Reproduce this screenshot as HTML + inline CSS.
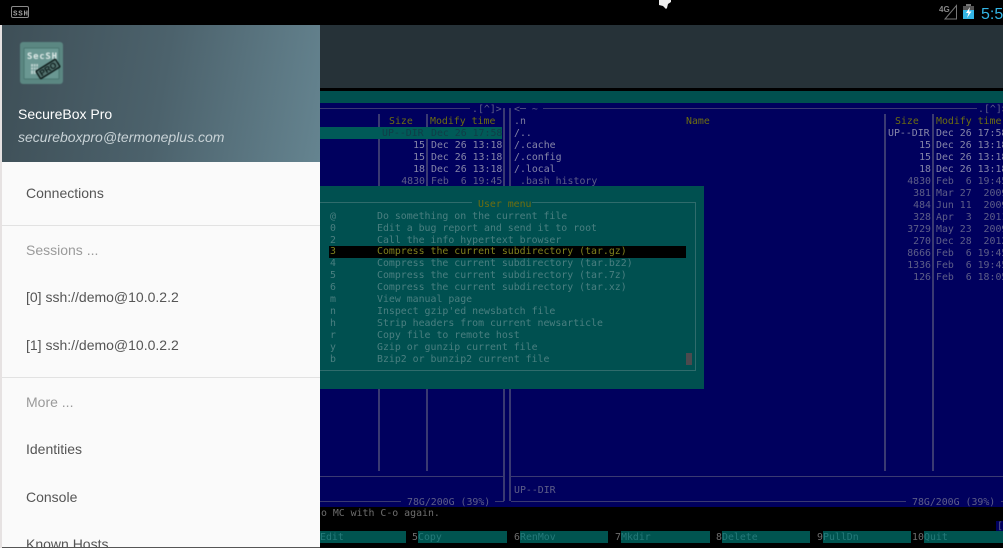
<!DOCTYPE html>
<html><head><meta charset="utf-8"><style>
html,body{margin:0;padding:0;background:#000;width:1003px;height:548px;overflow:hidden}
.a{position:absolute}
#term{position:absolute;left:0;top:0;width:1003px;height:548px;overflow:hidden;filter:blur(.3px)}
.t{position:absolute;font:9.9px/12px "DejaVu Sans Mono","Liberation Mono",monospace;white-space:pre;height:12px;margin-top:1px}
.h{color:#6e6e10}.d{color:#8686a8}.f{color:#5e5e88}.m{color:#4a7f80}.l{background:#3a3a72;position:absolute}
.r{text-align:right}
.i{position:absolute;left:26px;font:14px/20px "Liberation Sans",sans-serif;color:#555;white-space:nowrap}
.g{color:#9a9a9a}
.k{position:absolute;background:#005450;top:531px;height:12px}
.n{color:#6e6e6e}
.b{color:#103c48}
.u{color:#247a7a}
</style></head><body>
<div id="term">
<div class="a" style="left:0;top:25px;width:1003px;height:63px;background:#263238"></div>
<div class="a" style="left:0;top:91px;width:1003px;height:12px;background:#00504f"></div>
<div class="a" style="left:0;top:103px;width:1003px;height:404px;background:#00005e"></div>

<div class="l" style="left:320px;top:108px;width:150px;height:1px"></div>
<div class="l" style="left:543px;top:108px;width:434px;height:1px"></div>
<div class="l" style="left:378px;top:114px;width:2px;height:357px"></div>
<div class="l" style="left:426px;top:114px;width:2px;height:357px"></div>
<div class="l" style="left:503px;top:108px;width:2px;height:393px"></div>
<div class="l" style="left:509px;top:108px;width:2px;height:393px"></div>
<div class="l" style="left:884px;top:114px;width:2px;height:357px"></div>
<div class="l" style="left:932px;top:114px;width:2px;height:357px"></div>
<div class="l" style="left:320px;top:476px;width:184px;height:1px"></div>
<div class="l" style="left:511px;top:476px;width:492px;height:1px"></div>
<div class="l" style="left:320px;top:501px;width:81px;height:1px"></div>
<div class="l" style="left:495px;top:501px;width:9px;height:1px"></div>
<div class="l" style="left:511px;top:501px;width:395px;height:1px"></div>
<div class="l" style="left:1001px;top:501px;width:2px;height:1px"></div>
<div class="t f" style="left:472px;top:103px">.[^]&gt;</div>
<div class="t f" style="left:514px;top:103px">&lt;─ ~</div>
<div class="t f" style="left:978px;top:103px">.[^]&gt;</div>
<div class="t f" style="left:407px;top:496px">78G/200G (39%)</div>
<div class="t f" style="left:912px;top:496px">78G/200G (39%)</div>
<div class="t f" style="left:514px;top:484px">UP--DIR</div>

<div class="a" style="left:320px;top:127px;width:182px;height:12px;background:#005a58"></div>
<div class="t h" style="left:389px;top:115px">Size</div>
<div class="t h" style="left:430px;top:115px">Modify time</div>
<div class="t b" style="left:382px;top:127px">UP--DIR</div><div class="t b" style="left:431px;top:127px">Dec 26 17:58</div>
<div class="t d r" style="left:380px;width:45px;top:139px">15</div><div class="t d" style="left:431px;top:139px">Dec 26 13:18</div>
<div class="t d r" style="left:380px;width:45px;top:151px">15</div><div class="t d" style="left:431px;top:151px">Dec 26 13:18</div>
<div class="t d r" style="left:380px;width:45px;top:163px">18</div><div class="t d" style="left:431px;top:163px">Dec 26 13:18</div>
<div class="t f r" style="left:380px;width:45px;top:175px">4830</div><div class="t f" style="left:431px;top:175px">Feb  6 19:45</div>

<div class="t d" style="left:514px;top:115px;color:#7a7a9c">.n</div>
<div class="t h" style="left:686px;top:115px">Name</div>
<div class="t d" style="left:514px;top:127px">/..</div>
<div class="t d" style="left:514px;top:139px">/.cache</div>
<div class="t d" style="left:514px;top:151px">/.config</div>
<div class="t d" style="left:514px;top:163px">/.local</div>
<div class="t f" style="left:520px;top:175px">.bash_history</div>

<div class="t h" style="left:895px;top:115px">Size</div>
<div class="t h" style="left:936px;top:115px">Modify time</div>
<div class="t d" style="left:888px;top:127px">UP--DIR</div><div class="t d" style="left:936px;top:127px">Dec 26 17:58</div>
<div class="t d r" style="left:886px;width:45px;top:139px">15</div><div class="t d" style="left:936px;top:139px">Dec 26 13:18</div>
<div class="t d r" style="left:886px;width:45px;top:151px">15</div><div class="t d" style="left:936px;top:151px">Dec 26 13:18</div>
<div class="t d r" style="left:886px;width:45px;top:163px">18</div><div class="t d" style="left:936px;top:163px">Dec 26 13:18</div>
<div class="t f r" style="left:886px;width:45px;top:175px">4830</div><div class="t f" style="left:936px;top:175px">Feb  6 19:45</div>
<div class="t f r" style="left:886px;width:45px;top:187px">381</div><div class="t f" style="left:936px;top:187px">Mar 27  2009</div>
<div class="t f r" style="left:886px;width:45px;top:199px">484</div><div class="t f" style="left:936px;top:199px">Jun 11  2009</div>
<div class="t f r" style="left:886px;width:45px;top:211px">328</div><div class="t f" style="left:936px;top:211px">Apr  3  2011</div>
<div class="t f r" style="left:886px;width:45px;top:223px">3729</div><div class="t f" style="left:936px;top:223px">May 23  2009</div>
<div class="t f r" style="left:886px;width:45px;top:235px">270</div><div class="t f" style="left:936px;top:235px">Dec 28  2012</div>
<div class="t f r" style="left:886px;width:45px;top:247px">8666</div><div class="t f" style="left:936px;top:247px">Feb  6 19:45</div>
<div class="t f r" style="left:886px;width:45px;top:259px">1336</div><div class="t f" style="left:936px;top:259px">Feb  6 19:45</div>
<div class="t f r" style="left:886px;width:45px;top:271px">126</div><div class="t f" style="left:936px;top:271px">Feb  6 18:05</div>

<div class="a" style="left:320px;top:186px;width:384px;height:203px;background:#005050"></div>
<div class="a" style="left:320px;top:202px;width:375px;height:167px;border:1px solid #2f6c6c;border-left:0;box-sizing:content-box"></div>
<div class="a" style="left:472px;top:198px;width:60px;height:12px;background:#005050"></div>
<div class="t h" style="left:478px;top:198px">User menu</div>
<div class="a" style="left:329px;top:246px;width:357px;height:12px;background:#000"></div>
<div class="a" style="left:686px;top:353px;width:6px;height:12px;background:#4c4a4e"></div>

<div class="t m" style="left:330px;top:210px">@</div><div class="t m" style="left:377px;top:210px">Do something on the current file</div>
<div class="t m" style="left:330px;top:222px">0</div><div class="t m" style="left:377px;top:222px">Edit a bug report and send it to root</div>
<div class="t m" style="left:330px;top:234px">2</div><div class="t m" style="left:377px;top:234px">Call the info hypertext browser</div>
<div class="t h" style="left:330px;top:245px;color:#80801c">3</div><div class="t h" style="left:377px;top:245px;color:#80801c">Compress the current subdirectory (tar.gz)</div>
<div class="t m" style="left:330px;top:257px">4</div><div class="t m" style="left:377px;top:257px">Compress the current subdirectory (tar.bz2)</div>
<div class="t m" style="left:330px;top:269px">5</div><div class="t m" style="left:377px;top:269px">Compress the current subdirectory (tar.7z)</div>
<div class="t m" style="left:330px;top:281px">6</div><div class="t m" style="left:377px;top:281px">Compress the current subdirectory (tar.xz)</div>
<div class="t m" style="left:330px;top:293px">m</div><div class="t m" style="left:377px;top:293px">View manual page</div>
<div class="t m" style="left:330px;top:305px">n</div><div class="t m" style="left:377px;top:305px">Inspect gzip'ed newsbatch file</div>
<div class="t m" style="left:330px;top:317px">h</div><div class="t m" style="left:377px;top:317px">Strip headers from current newsarticle</div>
<div class="t m" style="left:330px;top:329px">r</div><div class="t m" style="left:377px;top:329px">Copy file to remote host</div>
<div class="t m" style="left:330px;top:341px">y</div><div class="t m" style="left:377px;top:341px">Gzip or gunzip current file</div>
<div class="t m" style="left:330px;top:353px">b</div><div class="t m" style="left:377px;top:353px">Bzip2 or bunzip2 current file</div>

<div class="t n" style="left:315px;top:507px">to MC with C-o again.</div>
<div class="a" style="left:996px;top:521px;width:7px;height:11px;background:#00005e"></div>
<div class="t f" style="left:997px;top:520px">[</div>

<div class="k" style="left:320px;width:86px"></div>
<div class="k" style="left:418px;width:89px"></div>
<div class="k" style="left:520px;width:88px"></div>
<div class="k" style="left:621px;width:89px"></div>
<div class="k" style="left:722px;width:88px"></div>
<div class="k" style="left:823px;width:88px"></div>
<div class="k" style="left:924px;width:79px"></div>
<div class="t u" style="left:320px;top:531px">Edit</div>
<div class="t n" style="left:412px;top:531px">5</div><div class="t u" style="left:418px;top:531px">Copy</div>
<div class="t n" style="left:514px;top:531px">6</div><div class="t u" style="left:520px;top:531px">RenMov</div>
<div class="t n" style="left:615px;top:531px">7</div><div class="t u" style="left:621px;top:531px">Mkdir</div>
<div class="t n" style="left:716px;top:531px">8</div><div class="t u" style="left:722px;top:531px">Delete</div>
<div class="t n" style="left:817px;top:531px">9</div><div class="t u" style="left:823px;top:531px">PullDn</div>
<div class="t n" style="left:912px;top:531px">10</div><div class="t u" style="left:924px;top:531px">Quit</div>
</div>

<!-- status bar -->
<div class="a" style="left:0;top:0;width:1003px;height:25px;background:#000"></div>
<svg class="a" style="left:0;top:0" width="1003" height="25" viewBox="0 0 1003 25">
<rect x="11.5" y="6.5" width="17" height="11" rx="1.5" fill="none" stroke="#8a8a8a" stroke-width="1"/>
<text x="13" y="15.5" font-family="Liberation Mono,monospace" font-size="7.5" font-weight="bold" fill="#a0a0a0" textLength="15">SSH</text>
<path d="M659 0H671V2L668 4L667 8L666 9L663 6L659 5Z" fill="#eee"/>
<text x="939" y="12" font-family="Liberation Sans,sans-serif" font-size="8" font-weight="bold" fill="#888">4G</text>
<path d="M956.5 5.5V19H945Z" fill="none" stroke="#777" stroke-width="1"/>
<rect x="966" y="4" width="5" height="2" fill="#777"/>
<rect x="963" y="6" width="11" height="4" fill="#555"/>
<rect x="963" y="10" width="11" height="9" fill="#33b5e5"/>
<path d="M970 7L966 13H968.5L967 18L971.5 11.5H969Z" fill="#fff"/>
<text x="981" y="19" font-family="Liberation Sans,sans-serif" font-size="16" fill="#33b5e5">5:5</text>
</svg>

<!-- drawer -->
<div class="a" style="left:0;top:25px;width:2px;height:523px;background:#e6e2e2"></div>
<div class="a" style="left:2px;top:25px;width:317.5px;height:523px;background:#fafafa;overflow:hidden">
<div class="a" style="left:0;top:522px;width:318px;height:1px;background:#555;z-index:3"></div>
<div class="a" style="left:0;top:0;width:318px;height:136.5px;background:linear-gradient(100deg,#3e4f57 0%,#4c626c 50%,#658490 100%)"></div>
</div>
<svg class="a" style="left:18px;top:40px;filter:blur(.4px)" width="48" height="48" viewBox="0 0 48 48">
<rect x="2" y="2" width="43" height="42" rx="3" fill="#5b8782"/>
<rect x="6" y="8" width="35" height="31" rx="1" fill="#6a9792" stroke="#4a7570" stroke-width="1"/>
<text x="24" y="19" text-anchor="middle" font-family="DejaVu Sans Mono,monospace" font-size="9" font-weight="bold" fill="#dfeae8" textLength="30">SecSH</text>
<rect x="13" y="24" width="7" height="10" fill="#b9cfcc"/>
<path d="M13 27H20M13 30H20M15.5 24V34M18 24V34" stroke="#6a9792" stroke-width=".7"/>
<g transform="rotate(-32 30 29)">
<rect x="18.5" y="24.5" width="23" height="9" rx="1" fill="#52716d" stroke="#0c1a19" stroke-width="1.4"/>
<text x="30" y="32" text-anchor="middle" font-family="Liberation Sans,sans-serif" font-size="8.5" font-weight="bold" fill="#0f1f1e">PRO</text>
</g>
</svg>
<div class="a" style="left:18px;top:104px;font:14px/20px 'Liberation Sans',sans-serif;color:#fff;white-space:nowrap">SecureBox Pro</div>
<div class="a" style="left:18px;top:127px;font:italic 14px/20px 'Liberation Sans',sans-serif;color:#c8d2d6;white-space:nowrap">secureboxpro@termoneplus.com</div>

<div class="i" style="top:183px">Connections</div>
<div class="a" style="left:2px;top:225px;width:318px;height:1px;background:#e2e2e2"></div>
<div class="i g" style="top:240px">Sessions ...</div>
<div class="i" style="top:287px">[0] ssh://demo@10.0.2.2</div>
<div class="i" style="top:335px">[1] ssh://demo@10.0.2.2</div>
<div class="a" style="left:2px;top:377px;width:318px;height:1px;background:#e2e2e2"></div>
<div class="i g" style="top:392px">More ...</div>
<div class="i" style="top:439px">Identities</div>
<div class="i" style="top:487px">Console</div>
<div class="a" style="left:2px;top:530px;width:317.5px;height:17px;overflow:hidden"><div class="i" style="left:24px;top:4px">Known Hosts</div></div>
</body></html>
